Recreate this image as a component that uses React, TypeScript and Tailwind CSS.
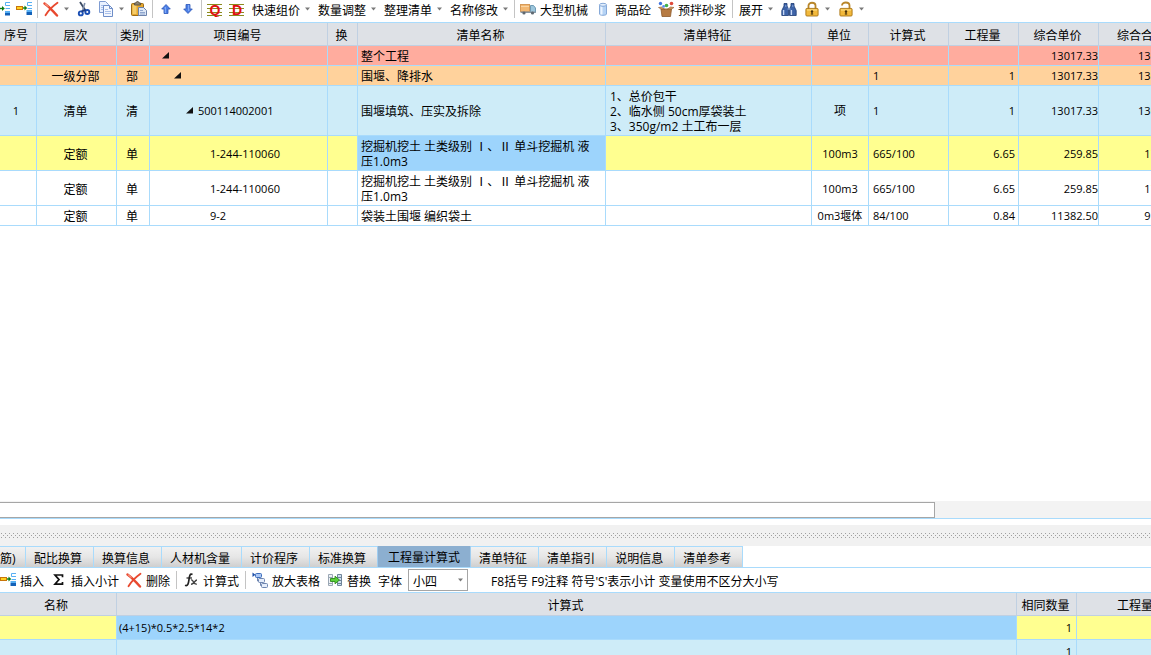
import React from 'react';
import { clsx } from 'clsx';

/* ---------- icons ---------- */

function Icon({ children }: { children: React.ReactNode }) {
  return (
    <svg width="16" height="16" viewBox="0 0 16 16" fill="none" className="shrink-0" aria-hidden>
      {children}
    </svg>
  );
}

function InsertIcon() {
  return (
    <Icon>
      <rect x="0.5" y="5.5" width="6" height="3" fill="#FFD21E" stroke="#C8750A" />
      <path d="M7 7H9.5" stroke="#0A7A12" strokeWidth="1.4" />
      <path d="M8.5 4.4L11.2 7L8.5 9.6Z" fill="#0A7A12" />
      <path d="M16 1.5H11.5V4.5H16" stroke="#58B0F4" fill="#FFFFFF" />
      <path d="M11.5 7.5H16" stroke="#58B0F4" />
      <rect x="10.5" y="9" width="5.5" height="2" fill="#58B0F4" />
      <rect x="10.5" y="11" width="5.5" height="3" fill="#1261B8" />
    </Icon>
  );
}

function AddRowIcon() {
  return (
    <Icon>
      <path d="M4 7.5H9" stroke="#0A7A12" strokeWidth="1.4" />
      <path d="M8 4.9L10.8 7.5L8 10.1Z" fill="#0A7A12" />
      <path d="M16 1.5H11.5V4.5H16" stroke="#58B0F4" />
      <path d="M11.5 7.5H16" stroke="#58B0F4" />
      <rect x="11" y="10" width="5" height="2" fill="#58B0F4" />
      <rect x="11" y="12" width="5" height="2.5" fill="#1261B8" />
    </Icon>
  );
}

function DeleteIcon() {
  return (
    <Icon>
      <path d="M1.5 2.5C5 5 10 10 14 14.5" stroke="#E8492F" strokeWidth="2.4" strokeLinecap="round" />
      <path d="M14.5 1.8C10 5 5 10 2.5 14.3" stroke="#E8492F" strokeWidth="1.8" strokeLinecap="round" />
      <path d="M2 2.6L5.5 5.6" stroke="#F79A86" strokeWidth="1.2" />
    </Icon>
  );
}

function CutIcon() {
  return (
    <Icon>
      <path d="M4 1L9.5 9.5" stroke="#3B4A63" strokeWidth="1.8" />
      <path d="M8.8 2L6.8 9" stroke="#7C8CA8" strokeWidth="1.6" />
      <circle cx="4.8" cy="12.4" r="2" stroke="#1B4FB4" strokeWidth="1.9" />
      <circle cx="11.3" cy="11" r="2" stroke="#1B4FB4" strokeWidth="1.9" />
      <path d="M5.6 10.4L9.5 9" stroke="#1B3C86" strokeWidth="2" />
    </Icon>
  );
}

function CopyIcon() {
  return (
    <Icon>
      <path d="M1.5 0.5H7.5L10.5 3.5V11.5H1.5Z" fill="#E9F1FF" stroke="#7F9CD2" />
      <path d="M3 4.5H6M3 6.5H6M3 8.5H6" stroke="#A9C0EA" />
      <path d="M5.5 4.5H11.5L14.5 7.5V15.5H5.5Z" fill="#F3F7FF" stroke="#6F8EC8" />
      <path d="M11.5 4.5V7.5H14.5" stroke="#6F8EC8" />
      <path d="M7 8.5H10M7 10.5H13M7 12.5H13" stroke="#A9C0EA" />
    </Icon>
  );
}

function PasteIcon() {
  return (
    <Icon>
      <rect x="0.5" y="2.5" width="12" height="12" rx="1" fill="#E5A72E" stroke="#9B6A15" />
      <rect x="1.5" y="4" width="4" height="9" fill="#F6CD6A" />
      <path d="M3.5 4V2H5C5 0 8 0 8 2H9.5V4Z" fill="#8C8270" stroke="#5F5540" />
      <path d="M7.5 6.5H12.5L15.5 9.5V14.5H7.5Z" fill="#DDE7F6" stroke="#6C83AC" />
      <path d="M9 9.5H12M9 11.5H14M9 13H14" stroke="#8FA6CE" />
    </Icon>
  );
}

function ArrowIcon({ down }: { down?: boolean }) {
  return (
    <Icon>
      <g transform={down ? 'rotate(180 8 8)' : undefined}>
        <path d="M8 3.5L12.3 8H10V12.5H6V8H3.7Z" fill="#4B7FE6" stroke="#2C56B8" strokeWidth="0.8" />
        <path d="M7.3 6V12" stroke="#8FB4FA" />
      </g>
    </Icon>
  );
}

function LetterIcon({ letter }: { letter: string }) {
  return (
    <Icon>
      <path d="M0 3.5H15M0 7.5H15M0 11.5H15M0 14.5H15" stroke="#8B8A1E" />
      <text
        x="8"
        y="14"
        textAnchor="middle"
        fontSize="14"
        fontWeight="bold"
        fontFamily="Liberation Sans, sans-serif"
        fill="#E01010"
      >
        {letter}
      </text>
    </Icon>
  );
}

function TruckIcon() {
  return (
    <Icon>
      <rect x="0.5" y="3.5" width="9" height="7" fill="#F3B872" stroke="#D69A58" />
      <path d="M1 5.5H9" stroke="#F9D5A4" />
      <path d="M10.5 4.5H13.5L15.5 7V11.5H10.5Z" fill="#9CC6DC" stroke="#6F9AB4" />
      <rect x="0.5" y="10.5" width="15" height="1.5" fill="#8795A2" />
      <circle cx="4" cy="12" r="1.6" fill="#5F6870" />
      <circle cx="12.5" cy="12" r="1.6" fill="#5F6870" />
    </Icon>
  );
}

function CylinderIcon() {
  return (
    <Icon>
      <path d="M4.5 4V13C4.5 14.7 11.5 14.7 11.5 13V4" fill="#B5D3F5" stroke="#86A9D8" />
      <path d="M6.5 5V13.5" stroke="#EDF5FF" strokeWidth="2" />
      <ellipse cx="8" cy="3.8" rx="3.5" ry="1.5" fill="#E3EFFC" stroke="#86A9D8" />
    </Icon>
  );
}

function BoxIcon() {
  return (
    <Icon>
      <path d="M3 8H13.5L12.5 15.5H4Z" fill="#B77B42" stroke="#8D5A2B" strokeWidth="0.8" />
      <path d="M3 8L0.5 6.5L3.5 6L7 8.5ZM13.5 8L16 6.5L12.5 6L9 8.5Z" fill="#D59B60" stroke="#8D5A2B" strokeWidth="0.6" />
      <circle cx="2.5" cy="2.5" r="1.7" fill="#3E73E0" />
      <circle cx="8.5" cy="4.5" r="1.8" fill="#43B04A" />
      <circle cx="13.5" cy="2.5" r="1.8" fill="#E04A3A" />
      <circle cx="5.6" cy="5.4" r="1.4" fill="#5E8DEB" />
    </Icon>
  );
}

function BinocularsIcon() {
  return (
    <Icon>
      <path d="M3 2.5H6V5L7.5 8V14.5H0.8V9.5L3 5Z" fill="#3D63A8" stroke="#1D3B74" strokeWidth="0.8" />
      <path d="M10 2.5H13V5L15.2 9.5V14.5H8.5V8L10 5Z" fill="#3D63A8" stroke="#1D3B74" strokeWidth="0.8" />
      <path d="M2.6 9V14M10.4 9V14" stroke="#C5D6F4" strokeWidth="1.4" />
      <path d="M4 5H5.5M11 5H12.5M6.5 8H9.5" stroke="#9DB7E6" />
    </Icon>
  );
}

function LockIcon({ open }: { open?: boolean }) {
  return (
    <Icon>
      <path
        d={open ? 'M4 4.5C4 0.5 11.5 0.5 11.5 4.5V8' : 'M4.5 8V4.5C4.5 0.8 11.5 0.8 11.5 4.5V8'}
        stroke="#B8862A"
        strokeWidth="1.8"
      />
      <rect x="1.9" y="7.4" width="12.2" height="7.6" rx="1" fill="#F2B93C" stroke="#A87414" strokeWidth="0.9" />
      <path d="M3 9H13" stroke="#FCE08C" />
      <circle cx="8" cy="10.5" r="1.2" fill="#4A3208" />
      <path d="M8 10V13.3M6.8 13H9.2" stroke="#4A3208" />
    </Icon>
  );
}

function SigmaIcon() {
  return (
    <Icon>
      <path d="M11.5 5.2V3H4L8 7.6L4 12.2H11.5V10" stroke="#111" strokeWidth="1.7" />
    </Icon>
  );
}

function FxIcon() {
  return (
    <Icon>
      <path d="M9.5 2.5C7 1 6.5 4 6 7.5C5.5 11.5 4.8 14.5 2 13.3" stroke="#222" strokeWidth="1.7" />
      <path d="M3.5 6H9" stroke="#222" strokeWidth="1.2" />
      <path d="M8 8C10.5 7 10.5 13 13.8 12M14 8C12 8 10.5 12.5 8 12.3" stroke="#444" strokeWidth="1.4" />
    </Icon>
  );
}

function ZoomGridIcon() {
  return (
    <Icon>
      <path d="M0.5 0.5V5L3.4 2.8Z" fill="#1D4FA8" />
      <rect x="3.5" y="1.5" width="6" height="4" rx="1" fill="#A9C6F4" stroke="#3D6DBB" />
      <path d="M5.5 6V9H7M8.5 11V13.5H10" stroke="#6F86B0" />
      <rect x="6.5" y="6.5" width="6" height="4" rx="1" fill="#E6EEFB" stroke="#6F86B0" />
      <rect x="9.5" y="11.5" width="6" height="4" rx="1" fill="#E6EEFB" stroke="#6F86B0" />
    </Icon>
  );
}

function ReplaceIcon() {
  return (
    <Icon>
      <path d="M1.5 2.5H5.5V13.5H1.5ZM1.5 5.5H5.5M1.5 11.5H5.5" fill="#EDF1F5" stroke="#9AA7B4" />
      <path d="M10.5 2.5H14.5V13.5H10.5ZM10.5 5.5H14.5M10.5 8.5H14.5M10.5 11.5H14.5" fill="#CFE0F0" stroke="#6F8499" />
      <path d="M3.5 6.5H8V4.2L12.5 8L8 11.8V9.5H3.5Z" fill="#5BD03A" stroke="#2C8A1A" strokeWidth="0.9" />
    </Icon>
  );
}

function Caret() {
  return (
    <svg width="7" height="4" viewBox="0 0 7 4" className="shrink-0" aria-hidden>
      <path d="M1 0.5H6L3.5 3.5Z" fill="#7A7A7A" />
    </svg>
  );
}

function Expander() {
  return (
    <svg width="7" height="7" viewBox="0 0 7 7" className="mr-[5px] shrink-0" aria-hidden>
      <path d="M7 0V6.5H0Z" fill="#111" />
    </svg>
  );
}

/* ---------- toolbar pieces ---------- */

interface ToolButtonProps {
  icon?: React.ReactNode;
  label?: string;
  title?: string;
  menu?: boolean;
}

function ToolButton({ icon, label, title, menu }: ToolButtonProps) {
  return (
    <button
      type="button"
      title={title}
      aria-label={label ?? title}
      className="flex shrink-0 items-center gap-1 whitespace-nowrap"
    >
      {icon}
      {label && <span className="pt-0.5">{label}</span>}
      {menu && <Caret />}
    </button>
  );
}

function Separator({ tight }: { tight?: boolean }) {
  return <span className={clsx('h-[18px] w-px shrink-0 bg-[#c4c4c4]', tight ? '-mx-0.5' : '-mx-px')} />;
}

function MainToolbar() {
  return (
    <div className="-ml-1.5 flex h-[22px] shrink-0 items-center gap-[7px] overflow-hidden pb-1">
      <div className="flex shrink-0 items-center gap-1.5">
        <ToolButton icon={<AddRowIcon />} title="插入同级" />
        <ToolButton icon={<InsertIcon />} title="插入子级" />
        <Separator />
        <ToolButton icon={<DeleteIcon />} title="删除" menu />
        <ToolButton icon={<CutIcon />} title="剪切" />
        <ToolButton icon={<CopyIcon />} title="复制" menu />
        <ToolButton icon={<PasteIcon />} title="粘贴" />
        <Separator />
        <ToolButton icon={<ArrowIcon />} title="上移" />
        <ToolButton icon={<ArrowIcon down />} title="下移" />
        <Separator />
        <ToolButton icon={<LetterIcon letter="Q" />} title="清单" />
        <ToolButton icon={<LetterIcon letter="D" />} title="定额" />
      </div>
      <ToolButton label="快速组价" menu />
      <ToolButton label="数量调整" menu />
      <ToolButton label="整理清单" menu />
      <ToolButton label="名称修改" menu />
      <Separator tight />
      <ToolButton icon={<TruckIcon />} label="大型机械" />
      <ToolButton icon={<CylinderIcon />} label="商品砼" />
      <ToolButton icon={<BoxIcon />} label="预拌砂浆" />
      <Separator />
      <ToolButton label="展开" menu />
      <ToolButton icon={<BinocularsIcon />} title="查找" />
      <ToolButton icon={<LockIcon />} title="锁定" menu />
      <ToolButton icon={<LockIcon open />} title="解锁" menu />
    </div>
  );
}

/* ---------- bill of quantities ---------- */

interface BillRow {
  no?: string;
  level?: string;
  kind?: string;
  code?: string;
  expandable?: boolean;
  indent: string;
  name: string;
  nameSelected?: boolean;
  features?: string[];
  unit?: string;
  formula?: string;
  quantity?: string;
  unitPrice: string;
  total: string;
  className: string;
}

const BILL_ROWS: BillRow[] = [
  {
    expandable: true,
    indent: 'pl-3',
    name: '整个工程',
    unitPrice: '13017.33',
    total: '13017.33',
    className: 'h-5 bg-[#ffac9e]',
  },
  {
    level: '一级分部',
    kind: '部',
    expandable: true,
    indent: 'pl-6',
    name: '围堰、降排水',
    formula: '1',
    quantity: '1',
    unitPrice: '13017.33',
    total: '13017.33',
    className: 'h-5 bg-[#ffd29c]',
  },
  {
    no: '1',
    level: '清单',
    kind: '清',
    code: '500114002001',
    expandable: true,
    indent: 'pl-9',
    name: '围堰填筑、压实及拆除',
    features: ['1、总价包干', '2、临水侧 50cm厚袋装土', '3、350g/m2 土工布一层'],
    unit: '项',
    formula: '1',
    quantity: '1',
    unitPrice: '13017.33',
    total: '13017.33',
    className: 'h-[50px] bg-[#ceecf8]',
  },
  {
    level: '定额',
    kind: '单',
    code: '1-244-110060',
    indent: 'pl-15',
    name: '挖掘机挖土 土类级别 Ⅰ、Ⅱ 单斗挖掘机 液压1.0m3',
    nameSelected: true,
    unit: '100m3',
    formula: '665/100',
    quantity: '6.65',
    unitPrice: '259.85',
    total: '1728.00',
    className: 'h-[35px] bg-[#ffff90]',
  },
  {
    level: '定额',
    kind: '单',
    code: '1-244-110060',
    indent: 'pl-15',
    name: '挖掘机挖土 土类级别 Ⅰ、Ⅱ 单斗挖掘机 液压1.0m3',
    unit: '100m3',
    formula: '665/100',
    quantity: '6.65',
    unitPrice: '259.85',
    total: '1728.00',
    className: 'h-[35px] bg-white',
  },
  {
    level: '定额',
    kind: '单',
    code: '9-2',
    indent: 'pl-15',
    name: '袋装土围堰 编织袋土',
    unit: '0m3堰体',
    formula: '84/100',
    quantity: '0.84',
    unitPrice: '11382.50',
    total: '9561.30',
    className: 'h-5 bg-white',
  },
];

const BILL_COLUMNS = [
  { title: '序号', width: 'w-[37px]' },
  { title: '层次', width: 'w-[80px]' },
  { title: '类别', width: 'w-[33px]' },
  { title: '项目编号', width: 'w-[178px]' },
  { title: '换', width: 'w-[30px]' },
  { title: '清单名称', width: 'w-[248px]' },
  { title: '清单特征', width: 'w-[206px]' },
  { title: '单位', width: 'w-[57px]' },
  { title: '计算式', width: 'w-[80px]' },
  { title: '工程量', width: 'w-[70px]' },
  { title: '综合单价', width: 'w-[80px]' },
  { title: '综合合价', width: 'w-[87px]' },
];

const CELL = 'border-r border-b border-[#a9dbfc] align-middle whitespace-nowrap';
const CELL_TEXT = 'pt-0.5 pr-0.5 text-center';
const CELL_NUMBER = 'text-right text-[11px]';
const HEAD = 'border-r border-b border-[#c0d0e2] bg-[#dee1e6] pt-0.5 font-normal whitespace-nowrap';

function BillTable() {
  return (
    <table className="w-[1186px] table-fixed border-separate border-spacing-0 border-t border-[#a9dbfc]">
      <thead>
        <tr className="h-[23px]">
          {BILL_COLUMNS.map((col, i) => (
            <th key={col.title} className={clsx(HEAD, col.width, i === 0 ? 'pr-1' : 'pr-0.5')}>
              {col.title}
            </th>
          ))}
        </tr>
      </thead>
      <tbody>
        {BILL_ROWS.map((row, i) => (
          <tr key={i} className={row.className}>
            <td className={clsx(CELL, 'pr-1 text-center text-[11px]')}>{row.no}</td>
            <td className={clsx(CELL, CELL_TEXT)}>{row.level}</td>
            <td className={clsx(CELL, CELL_TEXT)}>{row.kind}</td>
            <td className={clsx(CELL, 'text-[11px]')}>
              <div className={clsx('flex items-center', row.indent)}>
                {row.expandable && <Expander />}
                {row.code}
              </div>
            </td>
            <td className={CELL} />
            <td className={clsx(CELL, row.nameSelected && 'bg-[#9dd4fc]')}>
              <div className="pt-0.5 pr-1 pl-[3px] whitespace-normal">{row.name}</div>
            </td>
            <td className={CELL}>
              <div className="px-1 pt-0.5">
                {row.features?.map((line) => (
                  <div key={line}>{line}</div>
                ))}
              </div>
            </td>
            <td className={clsx(CELL, 'text-center text-[11px]')}>
              {row.unit === '项' ? <span className="text-xs">{row.unit}</span> : row.unit}
            </td>
            <td className={clsx(CELL, 'text-[11px]')}>
              <div className="px-1">{row.formula}</div>
            </td>
            <td className={clsx(CELL, CELL_NUMBER)}>
              <div className="px-[3px]">{row.quantity}</div>
            </td>
            <td className={clsx(CELL, CELL_NUMBER)}>{row.unitPrice}</td>
            <td className={clsx(CELL, CELL_NUMBER)}>{row.total}</td>
          </tr>
        ))}
      </tbody>
    </table>
  );
}

/* ---------- lower pane ---------- */

function Splitter() {
  return (
    <div className="flex h-[21px] shrink-0 items-center bg-[#f1f1f1] pb-px">
      <svg className="h-[5px] w-full" shapeRendering="crispEdges" aria-hidden>
        <defs>
          <pattern id="grip" width="4" height="4" patternUnits="userSpaceOnUse">
            <rect x="1" y="0" width="1" height="1" fill="#a0a0a0" />
            <rect x="3" y="2" width="1" height="1" fill="#a0a0a0" />
          </pattern>
        </defs>
        <rect width="100%" height="5" fill="url(#grip)" />
      </svg>
    </div>
  );
}

const TABS = [
  '配比换算',
  '换算信息',
  '人材机含量',
  '计价程序',
  '标准换算',
  '工程量计算式',
  '清单特征',
  '清单指引',
  '说明信息',
  '清单参考',
];

const ACTIVE_TAB = '工程量计算式';

const TAB =
  'h-[21px] shrink-0 border-t border-r border-[#a9dbfc] bg-linear-to-b from-[#f1f1f1] via-[#e6e6e6] to-[#cfcfcf] pt-0.5';

function TabBar() {
  return (
    <div
      role="tablist"
      className="flex h-[22px] shrink-0 items-end overflow-hidden border-b border-[#a9dbfc] whitespace-nowrap"
    >
      <button type="button" role="tab" aria-selected={false} className={clsx(TAB, 'w-[26px] pr-2.5 text-right')}>
        筋)
      </button>
      {TABS.map((tab) =>
        tab === ACTIVE_TAB ? (
          <button
            key={tab}
            type="button"
            role="tab"
            aria-selected
            className="-ml-px h-[22px] shrink-0 border border-b-0 border-[#a0cdf0] bg-[#8cafd0] px-2.5 pt-0.5"
          >
            {tab}
          </button>
        ) : (
          <button key={tab} type="button" role="tab" aria-selected={false} className={clsx(TAB, 'pr-[11px] pl-2')}>
            {tab}
          </button>
        )
      )}
    </div>
  );
}

function FormulaToolbar() {
  return (
    <div className="flex h-6 shrink-0 items-center gap-[7px] overflow-hidden whitespace-nowrap">
      <ToolButton icon={<InsertIcon />} label="插入" />
      <ToolButton icon={<SigmaIcon />} label="插入小计" />
      <ToolButton icon={<DeleteIcon />} label="删除" />
      <Separator />
      <ToolButton icon={<FxIcon />} label="计算式" />
      <Separator />
      <ToolButton icon={<ZoomGridIcon />} label="放大表格" />
      <ToolButton icon={<ReplaceIcon />} label="替换" />
      <div className="flex items-center gap-1.5">
        <label htmlFor="font-size" className="pt-0.5">
          字体
        </label>
        <div className="relative">
          <select
            id="font-size"
            defaultValue="小四"
            className="block h-[22px] w-[60px] appearance-none border border-[#a6a6a6] bg-white pt-0.5 pl-1"
          >
            <option>小四</option>
            <option>四号</option>
            <option>五号</option>
          </select>
          <span className="pointer-events-none absolute inset-y-0 right-1 flex items-center">
            <Caret />
          </span>
        </div>
      </div>
      <span className="ml-4 pt-0.5">F8括号 F9注释 符号'S'表示小计 变量使用不区分大小写</span>
    </div>
  );
}

function FormulaTable() {
  return (
    <table className="w-full min-w-[1196px] table-fixed border-separate border-spacing-0 border-t border-[#a9dbfc]">
      <thead>
        <tr className="h-[23px]">
          <th className={clsx(HEAD, 'w-[117px] pr-1')}>名称</th>
          <th className={clsx(HEAD, 'pr-0.5')}>计算式</th>
          <th className={clsx(HEAD, 'w-[60px] pr-0.5')}>相同数量</th>
          <th className={clsx(HEAD, 'w-[119px] pr-0.5')}>工程量</th>
        </tr>
      </thead>
      <tbody className="text-[11px]">
        <tr className="h-6 bg-[#ffff90]">
          <td className={CELL} />
          <td className={clsx(CELL, 'bg-[#9dd4fc]')}>
            <div className="px-0.5">(4+15)*0.5*2.5*14*2</div>
          </td>
          <td className={clsx(CELL, CELL_NUMBER)}>
            <div className="px-1">1</div>
          </td>
          <td className={CELL} />
        </tr>
        <tr className="h-6 bg-[#ceecf8]">
          <td className={CELL} />
          <td className={CELL} />
          <td className={clsx(CELL, CELL_NUMBER)}>
            <div className="px-1">1</div>
          </td>
          <td className={CELL} />
        </tr>
      </tbody>
    </table>
  );
}

export default function App() {
  return (
    <div className="flex h-screen flex-col overflow-hidden bg-white font-['Open_Sans','Noto_Sans_CJK_SC',sans-serif] text-xs leading-[15px] text-black">
      <MainToolbar />

      <main className="min-h-0 flex-1 overflow-hidden">
        <BillTable />
      </main>

      <div className="h-[17px] shrink-0 bg-[#f3f3f3] pt-px">
        <div className="mr-54 h-4 border border-l-0 border-[#a6a6a6] bg-white" />
      </div>
      <div className="h-[7px] shrink-0 border-t border-[#a9dbfc]" />

      <Splitter />

      <section className="h-[109px] shrink-0 overflow-hidden">
        <TabBar />
        <FormulaToolbar />
        <FormulaTable />
      </section>
    </div>
  );
}
